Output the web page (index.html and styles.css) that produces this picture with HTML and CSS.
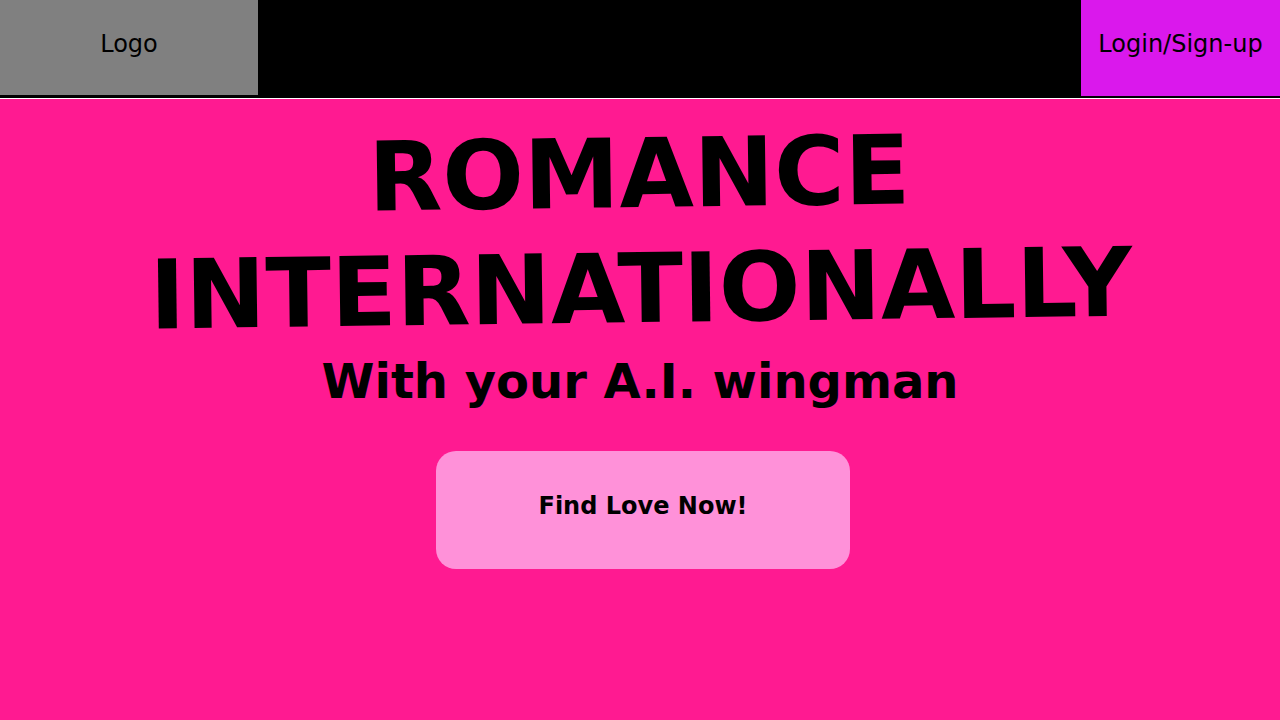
FILE: index.html
```html
<!DOCTYPE html>
<html lang="en">
<head>
<meta charset="utf-8">
<title>Romance Internationally</title>
<link rel="stylesheet" href="styles.css">
</head>
<body>
<header class="topbar">
  <div class="logo">Logo</div>
  <a class="login" href="#">Login/Sign-up</a>
</header>
<main class="hero">
  <h1 class="title">ROMANCE INTERNATIONALLY</h1>
  <h2 class="subtitle">With your A.I. wingman</h2>
  <a class="cta" href="#">Find Love Now!</a>
</main>
</body>
</html>
```
FILE: styles.css
```css
html, body {
  margin: 0;
  padding: 0;
}
body {
  background: #ff1a91;
  font-family: "DejaVu Sans", Verdana, sans-serif;
  color: #000;
  min-height: 720px;
}
.topbar {
  display: flex;
  justify-content: space-between;
  align-items: flex-start;
  height: 98px;
  background: #000;
  border-bottom: 1px solid #fff;
}
.logo {
  width: 258px;
  height: 95px;
  box-sizing: border-box;
  padding-top: 30px;
  background: #808080;
  text-align: center;
  font-size: 24px;
  line-height: 28px;
}
.login {
  width: 199px;
  height: 96px;
  box-sizing: border-box;
  padding-top: 30px;
  background: #da18ec;
  color: #000;
  text-decoration: none;
  text-align: center;
  font-size: 24px;
  line-height: 28px;
}
.hero {
  display: flex;
  flex-direction: column;
  align-items: center;
  text-align: center;
}
.title {
  margin: 18px 0 0;
  font-size: 96px;
  font-weight: bold;
  line-height: 1.2;
  transform: rotate(-0.75deg);
}
.subtitle {
  margin: 6px 0 0;
  font-size: 48px;
  font-weight: bold;
  line-height: normal;
}
.cta {
  margin-top: 42px;
  margin-left: 6px;
  width: 414px;
  height: 118px;
  box-sizing: border-box;
  padding-top: 41px;
  border-radius: 20px;
  background: #ff91d9;
  color: #000;
  text-decoration: none;
  font-size: 24px;
  font-weight: bold;
  line-height: 28px;
}
```
